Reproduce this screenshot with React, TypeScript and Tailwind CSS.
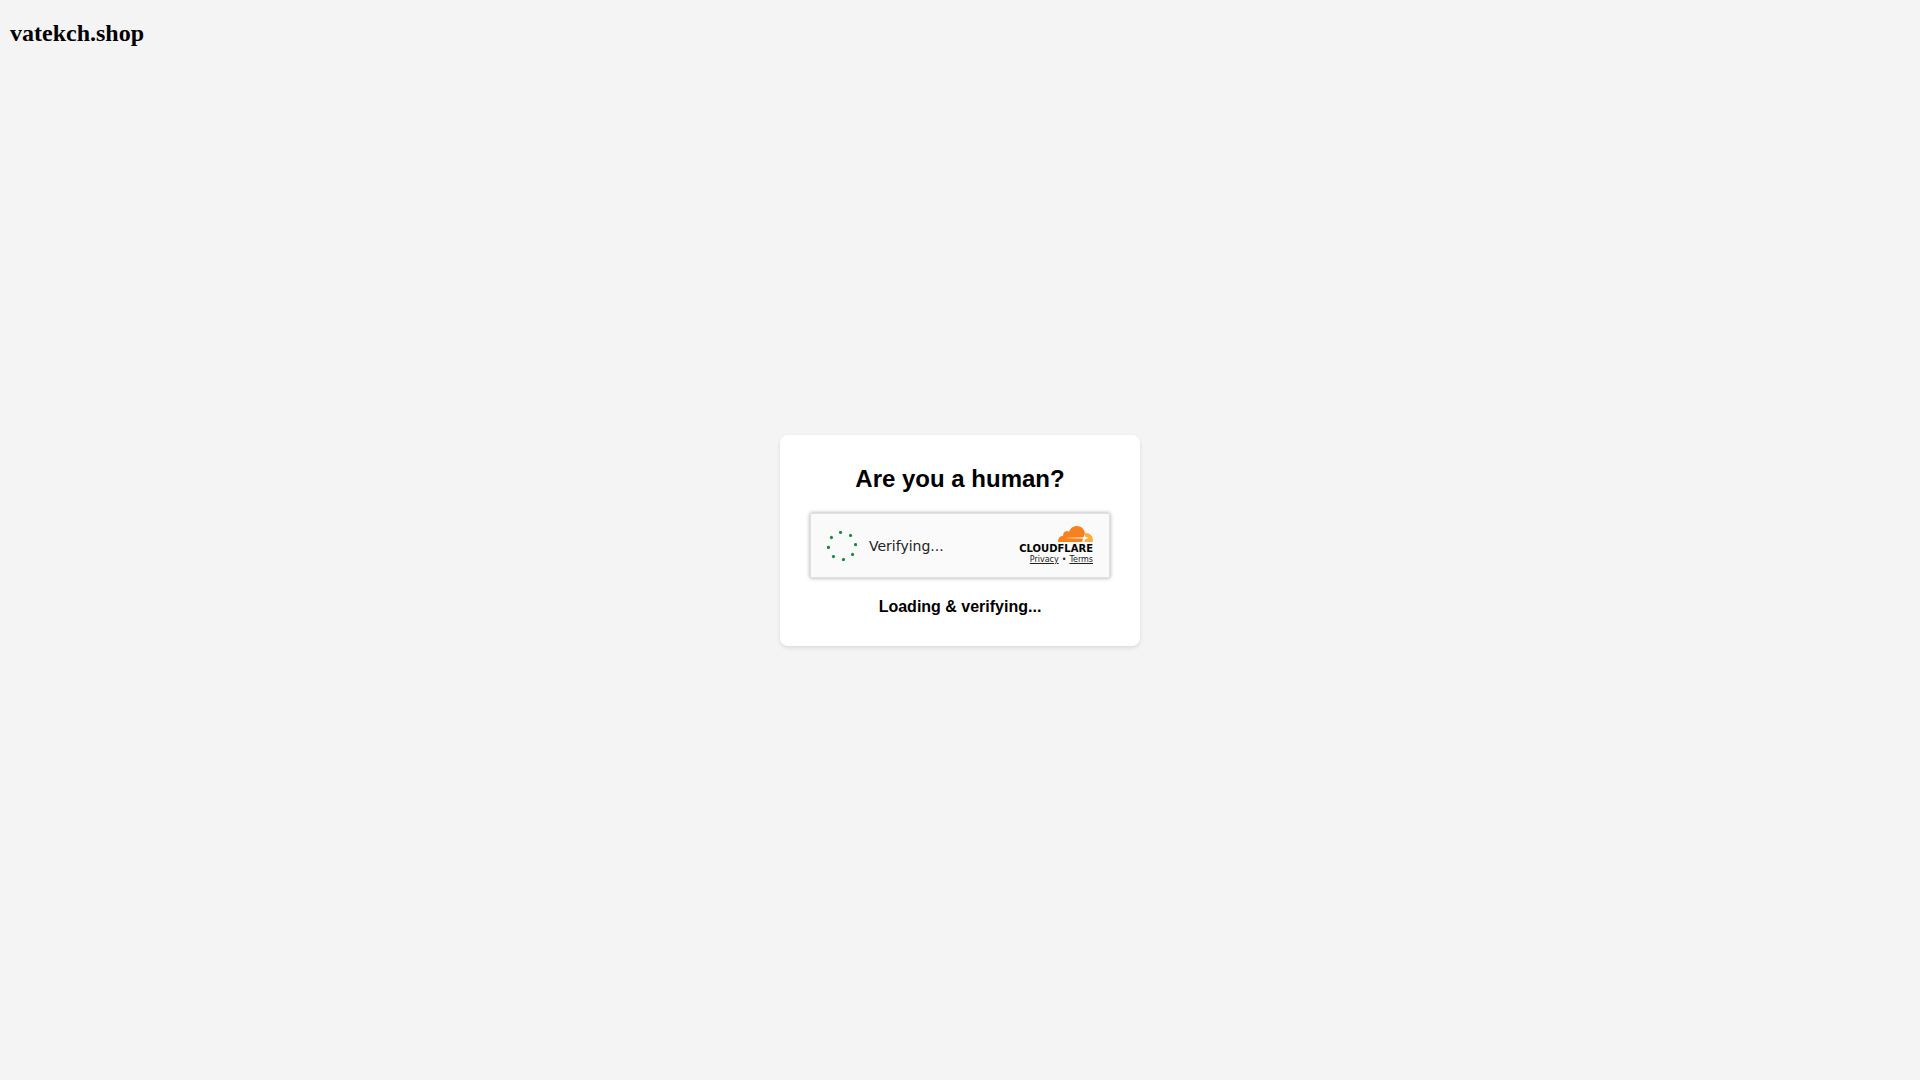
const dotAngles = [0, 45, 90, 135, 180, 225, 270, 315];

function Spinner() {
  return (
    <svg viewBox="0 0 30 30" className="size-[30px] shrink-0" aria-hidden="true">
      <g fill="#138d3c" transform="rotate(-6 15 15)">
        {dotAngles.map((angle) => (
          <circle key={angle} cx="15" cy="1.4" r="1.6" transform={`rotate(${angle} 15 15)`} />
        ))}
      </g>
    </svg>
  );
}

function Cloud() {
  return (
    <svg viewBox="38 0 35 16" className="h-4 w-[35px]" aria-hidden="true">
      <defs>
        <linearGradient id="beam" x1="46" y1="0" x2="64" y2="0" gradientUnits="userSpaceOnUse">
          <stop offset="0" stopColor="#fff" stopOpacity="0.15" />
          <stop offset="1" stopColor="#fff" stopOpacity="0.8" />
        </linearGradient>
      </defs>
      <path
        fill="#f6821f"
        d="M61.9 16H38.36a.24.24 0 0 1-.24-.21 5.4 5.4 0 0 1 5.08-6.14A3.85 3.85 0 0 1 49.03 5.69C50.14 2.38 53.23 0 56.87 0c3.94 0 7.24 2.81 8.06 6.56L64.2 9.6z"
      />
      <path
        fill="#fbad41"
        d="M64.9 7c.4-.04.8-.05 1.18-.05 3.8 0 6.88 3.12 6.88 6.98 0 .64-.09 1.27-.25 1.89a.26.26 0 0 1-.25.18H62.4z"
      />
      <path fill="url(#beam)" d="M47.3 11.2H62.5v1.5H47.3z" />
      <path
        fill="#fff"
        d="M64.8 8.4l.6 2.6 2.6.8v.4l-2.6.8-1.3 3h-1.3l.4-3.2-1.6-.8 2.3-1z"
      />
    </svg>
  );
}

export default function App() {
  return (
    <div className="relative flex min-h-screen items-center justify-center bg-[#f4f4f4] text-black">
      <h1 className="absolute top-[19px] left-2.5 font-['Liberation_Serif',serif] text-2xl leading-7 font-bold">
        vatekch.shop
      </h1>

      <main className="rounded-lg bg-white p-[30px] text-center font-['Liberation_Sans',sans-serif] shadow-[0_2px_4px_rgba(0,0,0,0.1)]">
        <h2 className="mb-5 text-2xl leading-7 font-bold">Are you a human?</h2>

        <section className="flex w-[300px] items-center gap-3 border border-[#e0e0e0] bg-[#fafafa] px-4 pt-3 pb-2.5 font-['DejaVu_Sans',sans-serif] text-[#232323] shadow-[0_0_4px_rgba(0,0,0,0.35)]">
          <Spinner />
          <span className="text-sm">Verifying...</span>
          <div className="ml-auto flex flex-col items-end pb-0.5">
            <Cloud />
            <span className="text-[10px] leading-[13px] font-bold text-black">CLOUDFLARE</span>
            <div className="flex gap-[3px] text-[8px] leading-[10px]">
              <a href="#privacy" className="underline">
                Privacy
              </a>
              <span>•</span>
              <a href="#terms" className="underline">
                Terms
              </a>
            </div>
          </div>
        </section>

        <p className="mt-5 text-base leading-[18px] font-bold">Loading &amp; verifying...</p>
      </main>
    </div>
  );
}
